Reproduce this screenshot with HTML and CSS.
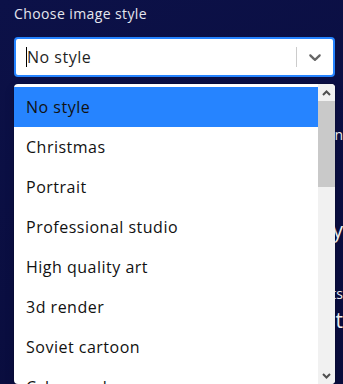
FILE: index.html
```html
<!DOCTYPE html>
<html lang="en">
<head>
    <meta charset="UTF-8">
    <meta name="viewport" content="width=device-width, initial-scale=1.0">
    <title>Image style</title>
    <link rel="stylesheet" href="styles.css">
</head>
<body>
    <div class="page">
        <label class="field-label">Choose image style</label>
        <div class="select">
            <div class="control">
                <div class="value"><span class="caret"></span>No style</div>
                <span class="separator"></span>
                <div class="indicator">
                    <svg width="20" height="20" viewBox="0 0 20 20"><path d="M4.516 7.548c0.436-0.446 1.043-0.481 1.576 0l3.908 3.747 3.908-3.747c0.533-0.481 1.141-0.446 1.574 0 0.436 0.445 0.408 1.197 0 1.615-0.406 0.418-4.695 4.502-4.695 4.502-0.217 0.223-0.502 0.335-0.787 0.335s-0.57-0.112-0.789-0.335c0 0-4.287-4.084-4.695-4.502s-0.436-1.17 0-1.615z"/></svg>
                </div>
            </div>

            <div class="menu">
                <ul class="options">
                    <li class="option active">No style</li>
                    <li class="option">Christmas</li>
                    <li class="option">Portrait</li>
                    <li class="option">Professional studio</li>
                    <li class="option">High quality art</li>
                    <li class="option">3d render</li>
                    <li class="option">Soviet cartoon</li>
                    <li class="option">Cyberpunk</li>
                </ul>
                <div class="scrollbar">
                    <div class="scroll-btn">
                        <svg width="9" height="6" viewBox="0 0 9 6"><path d="M1 5 L4.5 1.5 L8 5" /></svg>
                    </div>
                    <div class="thumb"></div>
                    <div class="track"></div>
                    <div class="scroll-btn">
                        <svg width="9" height="6" viewBox="0 0 9 6"><path d="M1 1 L4.5 4.5 L8 1" /></svg>
                    </div>
                </div>
            </div>
        </div>

        <div class="content">
            <p class="line small first">Type your prompt in</p>
            <p class="line big second">Stay</p>
            <p class="line small mid">Results</p>
            <p class="line big tight">Edit</p>
        </div>
    </div>
</body>
</html>
```

FILE: styles.css
```css
* {
    box-sizing: border-box;
}

body {
    margin: 0;
    background: linear-gradient(160deg, #0c1148 0%, #090c3c 100%);
    font-family: "Open Sans", "Noto Sans", sans-serif;
    height: 384px;
    overflow: hidden;
}

.page {
    padding: 4px 0 0 14px;
}

.field-label {
    display: block;
    color: #e4e6ee;
    font-size: 14px;
    line-height: 20px;
    letter-spacing: 0.4px;
    margin-bottom: 13px;
}

.select {
    position: relative;
    margin-right: 8px;
}

.control {
    display: flex;
    align-items: center;
    height: 40px;
    background: #fff;
    border: 2px solid #2684ff;
    border-radius: 4px;
}

.value {
    flex: 1;
    display: flex;
    align-items: center;
    padding-left: 10px;
    font-size: 16px;
    letter-spacing: 0.5px;
    color: #1f1f1f;
}

.caret {
    width: 1px;
    height: 20px;
    background: #000;
}

.separator {
    width: 1px;
    height: 20px;
    background: #cccccc;
}

.indicator {
    display: flex;
    padding: 8px;
}

.indicator svg {
    fill: #666;
}

.menu {
    position: absolute;
    top: 47px;
    left: 0;
    right: 0;
    height: 300px;
    display: flex;
    background: #fff;
    border-radius: 4px;
    box-shadow: 0 0 0 1px rgba(0, 0, 0, 0.1), 0 4px 11px rgba(0, 0, 0, 0.1);
    overflow: hidden;
    z-index: 2;
}

.options {
    flex: 1;
    list-style: none;
    margin: 0;
    padding: 3px 0 0;
}

.option {
    height: 40px;
    padding: 8px 12px;
    font-size: 16px;
    line-height: 24px;
    letter-spacing: 0.5px;
    color: #111;
}

.option.active {
    background: #2684ff;
}

.scrollbar {
    width: 17px;
    display: flex;
    flex-direction: column;
    background: #f1f1f1;
}

.scroll-btn {
    height: 17px;
    display: flex;
    align-items: center;
    justify-content: center;
}

.scroll-btn svg path {
    fill: none;
    stroke: #505050;
    stroke-width: 2;
}

.thumb {
    height: 86px;
    background: #c9c9c9;
}

.track {
    flex: 1;
}

.line {
    margin: 0;
    text-align: right;
    color: #f2f2f2;
    white-space: nowrap;
}

.small {
    font-size: 14px;
    line-height: 20px;
}

.big {
    font-size: 21px;
    line-height: 28px;
}

.first {
    margin-top: 48px;
}

.second {
    margin-top: 71px;
}

.mid {
    margin-top: 40px;
}

.tight {
    margin-top: 2px;
}
```
